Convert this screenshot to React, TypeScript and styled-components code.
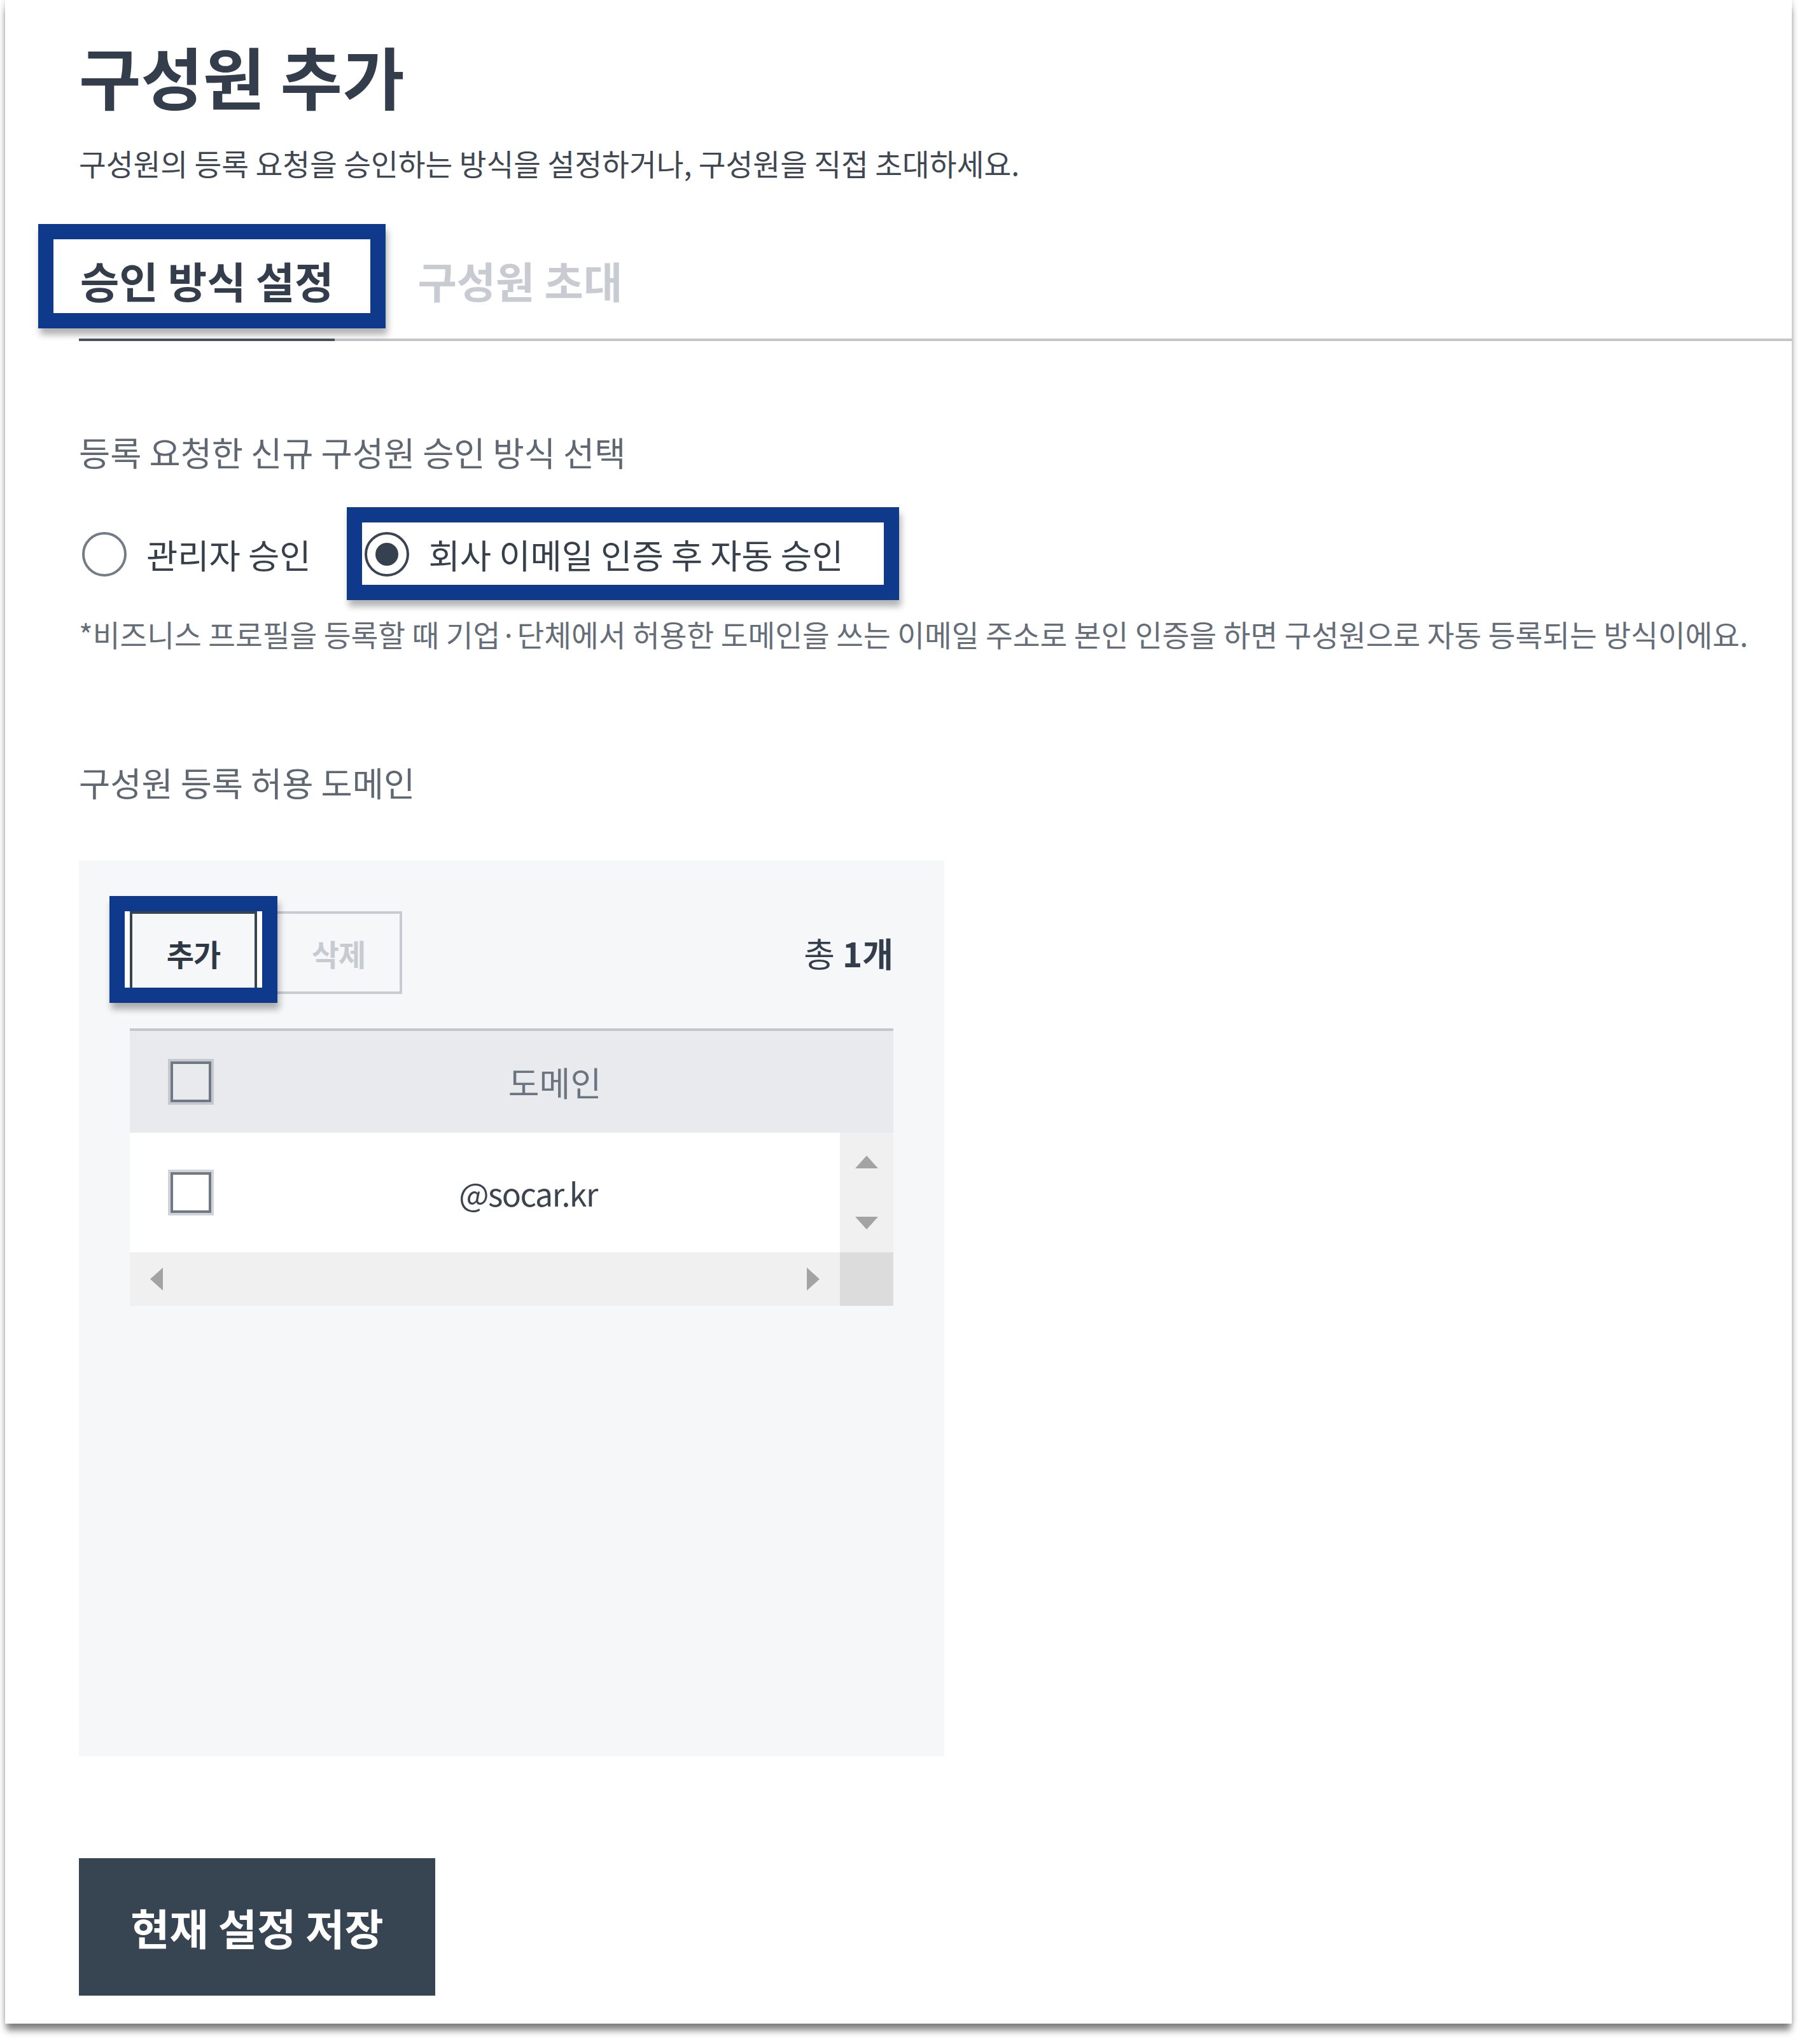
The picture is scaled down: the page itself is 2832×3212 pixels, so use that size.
import React from "react";
import styled, { createGlobalStyle } from "styled-components";

const GlobalStyle = createGlobalStyle`
  html, body { margin: 0; padding: 0; background: #ffffff; }
  body { font-family: "Noto Sans CJK KR", "Noto Sans", sans-serif; }
  *, *::before, *::after { box-sizing: border-box; }
`;

const Page = styled.div`
  padding: 0 16px 32px 8px;
`;

const Panel = styled.main`
  width: 2808px;
  height: 3180px;
  background: #ffffff;
  padding: 54px 0 0 116px;
  display: flex;
  flex-direction: column;
  box-shadow: 0 13px 10px -2px rgba(0, 0, 0, 0.45), 0 0 10px rgba(0, 0, 0, 0.2);
`;

const Title = styled.h1`
  margin: 0;
  font-size: 106px;
  line-height: 128px;
  font-weight: 700;
  color: #333d4b;
`;

const Subtitle = styled.p`
  margin: 44px 0 0;
  font-size: 46.5px;
  line-height: 60px;
  color: #3f4753;
`;

const TabBar = styled.nav`
  margin-top: 114px;
  display: flex;
  gap: 128px;
  border-bottom: 4px solid #c4c6cc;
`;

const Tab = styled.div<{ $active?: boolean }>`
  position: relative;
  padding: 0 2px 52px;
  margin-bottom: -4px;
  border-bottom: 4px solid ${(p) => (p.$active ? "#4b5360" : "transparent")};
  font-size: 66.7px;
  line-height: 80px;
  font-weight: 700;
  color: ${(p) => (p.$active ? "#333d4b" : "#c8ccd2")};
`;

const Highlight = styled.span<{ $t: number; $r: number; $b: number; $l: number; $inner?: boolean }>`
  position: absolute;
  top: ${(p) => p.$t}px;
  right: ${(p) => p.$r}px;
  bottom: ${(p) => p.$b}px;
  left: ${(p) => p.$l}px;
  border: 24px solid #0f3a8b;
  box-shadow: 3px 10px 10px rgba(0, 0, 0, 0.3)
    ${(p) => (p.$inner ? ", inset 8px 0 0 #ffffff, inset -8px 0 0 #ffffff" : "")};
  pointer-events: none;
  z-index: 2;
`;

const SectionLabel = styled.h2<{ $gap: number }>`
  margin: ${(p) => p.$gap}px 0 0;
  font-size: 53.5px;
  line-height: 64px;
  font-weight: 400;
  color: #5f6773;
`;

const RadioRow = styled.div`
  margin-top: 93px;
  height: 72px;
  padding-left: 5px;
  display: flex;
  align-items: center;
  gap: 84px;
`;

const RadioItem = styled.label`
  position: relative;
  display: flex;
  align-items: center;
  gap: 31px;
`;

const RadioCircle = styled.span<{ $checked?: boolean }>`
  width: 70px;
  height: 70px;
  border-radius: 50%;
  border: 4px solid ${(p) => (p.$checked ? "#3a4452" : "#737b86")};
  background: #ffffff;
  display: flex;
  align-items: center;
  justify-content: center;

  &::after {
    content: "";
    display: ${(p) => (p.$checked ? "block" : "none")};
    width: 36px;
    height: 36px;
    border-radius: 50%;
    background: #364150;
  }
`;

const RadioText = styled.span`
  font-size: 53.6px;
  line-height: 64px;
  color: #363f4c;
`;

const Note = styled.p`
  margin: 59px 0 0;
  font-size: 46.5px;
  line-height: 60px;
  white-space: nowrap;
  color: #656d79;
`;

const DomainBox = styled.section`
  margin-top: 91px;
  width: 1360px;
  height: 1408px;
  background: #f6f7f9;
  padding: 80px 80px 0;
`;

const Toolbar = styled.div`
  height: 130px;
  display: flex;
  align-items: center;
  justify-content: space-between;
`;

const ButtonGroup = styled.div`
  display: flex;
  gap: 28px;
`;

const ToolButton = styled.button<{ $primary?: boolean }>`
  position: relative;
  width: 200px;
  height: 130px;
  padding: 0;
  background: transparent;
  border: 4px solid ${(p) => (p.$primary ? "#374452" : "#c8cbd1")};
  font-family: inherit;
  font-size: 47px;
  font-weight: 700;
  letter-spacing: -1px;
  color: ${(p) => (p.$primary ? "#2f3845" : "#c7cbd1")};
`;

const Total = styled.div`
  font-size: 53px;
  line-height: 64px;
  color: #333d4b;

  strong {
    font-weight: 700;
  }
`;

const Table = styled.div`
  margin-top: 54px;
  border-top: 4px solid #c3c6cc;
`;

const HeaderRow = styled.div`
  height: 160px;
  display: grid;
  grid-template-columns: 136px 1fr;
  align-items: center;
  background: #e8eaee;
`;

const BodyRow = styled.div`
  height: 188px;
  display: flex;
`;

const RowMain = styled.div`
  flex: 1;
  display: grid;
  grid-template-columns: 136px 1fr;
  align-items: center;
  background: #ffffff;
`;

const CheckCell = styled.div`
  padding-left: 64px;
  display: flex;
  align-items: center;
`;

const Checkbox = styled.span<{ $halo: string; $bg: string }>`
  width: 64px;
  height: 64px;
  border: 4px solid #6f7883;
  background: ${(p) => p.$bg};
  box-shadow: 0 0 0 4px ${(p) => p.$halo};
`;

const CellText = styled.div<{ $header?: boolean }>`
  text-align: center;
  font-size: ${(p) => (p.$header ? 53 : 50)}px;
  line-height: 64px;
  letter-spacing: ${(p) => (p.$header ? 0 : -1.5)}px;
  color: ${(p) => (p.$header ? "#6c7480" : "#3c4450")};
`;

const VScroll = styled.div`
  width: 84px;
  background: #f0f0f0;
  padding: 36px 0;
  display: flex;
  flex-direction: column;
  align-items: center;
  justify-content: space-between;
`;

const HScrollRow = styled.div`
  height: 84px;
  display: flex;
`;

const HScroll = styled.div`
  flex: 1;
  background: #f0f0f0;
  padding: 0 32px;
  display: flex;
  align-items: center;
  justify-content: space-between;
`;

const Corner = styled.div`
  width: 84px;
  background: #dcdcdc;
`;

const SaveButton = styled.button`
  margin-top: 160px;
  align-self: flex-start;
  width: 560px;
  height: 216px;
  padding: 0;
  border: none;
  background: #374452;
  font-family: inherit;
  font-size: 66.5px;
  font-weight: 700;
  color: #ffffff;
`;

type Dir = "up" | "down" | "left" | "right";

const Arrow: React.FC<{ dir: Dir }> = ({ dir }) => {
  const vertical = dir === "up" || dir === "down";
  const w = vertical ? 36 : 20;
  const h = vertical ? 20 : 36;
  const points =
    dir === "up"
      ? "18,0 36,20 0,20"
      : dir === "down"
      ? "0,0 36,0 18,20"
      : dir === "left"
      ? "20,0 20,36 0,18"
      : "0,0 20,18 0,36";
  return (
    <svg width={w} height={h} viewBox={`0 0 ${w} ${h}`} style={{ display: "block" }}>
      <polygon points={points} fill="#a3a3a3" />
    </svg>
  );
};

export default function App() {
  return (
    <>
      <GlobalStyle />
      <Page>
        <Panel>
          <Title>구성원 추가</Title>
          <Subtitle>구성원의 등록 요청을 승인하는 방식을 설정하거나, 구성원을 직접 초대하세요.</Subtitle>

          <TabBar>
            <Tab $active>
              승인 방식 설정
              <Highlight $t={-48} $r={-80} $b={16} $l={-64} />
            </Tab>
            <Tab>구성원 초대</Tab>
          </TabBar>

          <SectionLabel $gap={142}>등록 요청한 신규 구성원 승인 방식 선택</SectionLabel>

          <RadioRow>
            <RadioItem>
              <RadioCircle />
              <RadioText>관리자 승인</RadioText>
            </RadioItem>
            <RadioItem>
              <RadioCircle $checked />
              <RadioText>회사 이메일 인증 후 자동 승인</RadioText>
              <Highlight $t={-39} $r={-88} $b={-37} $l={-28} />
            </RadioItem>
          </RadioRow>

          <Note>
            *비즈니스 프로필을 등록할 때 기업·단체에서 허용한 도메인을 쓰는 이메일 주소로 본인 인증을 하면 구성원으로 자동 등록되는 방식이에요.
          </Note>

          <SectionLabel $gap={171}>구성원 등록 허용 도메인</SectionLabel>

          <DomainBox>
            <Toolbar>
              <ButtonGroup>
                <ToolButton $primary>
                  추가
                  <Highlight $t={-28} $r={-36} $b={-18} $l={-36} $inner />
                </ToolButton>
                <ToolButton>삭제</ToolButton>
              </ButtonGroup>
              <Total>
                총 <strong>1개</strong>
              </Total>
            </Toolbar>

            <Table>
              <HeaderRow>
                <CheckCell>
                  <Checkbox $halo="#c5c9cf" $bg="#e8eaee" />
                </CheckCell>
                <CellText $header>도메인</CellText>
              </HeaderRow>
              <BodyRow>
                <RowMain>
                  <CheckCell>
                    <Checkbox $halo="#d0d4d8" $bg="#ffffff" />
                  </CheckCell>
                  <CellText>@socar.kr</CellText>
                </RowMain>
                <VScroll>
                  <Arrow dir="up" />
                  <Arrow dir="down" />
                </VScroll>
              </BodyRow>
              <HScrollRow>
                <HScroll>
                  <Arrow dir="left" />
                  <Arrow dir="right" />
                </HScroll>
                <Corner />
              </HScrollRow>
            </Table>
          </DomainBox>

          <SaveButton>현재 설정 저장</SaveButton>
        </Panel>
      </Page>
    </>
  );
}
